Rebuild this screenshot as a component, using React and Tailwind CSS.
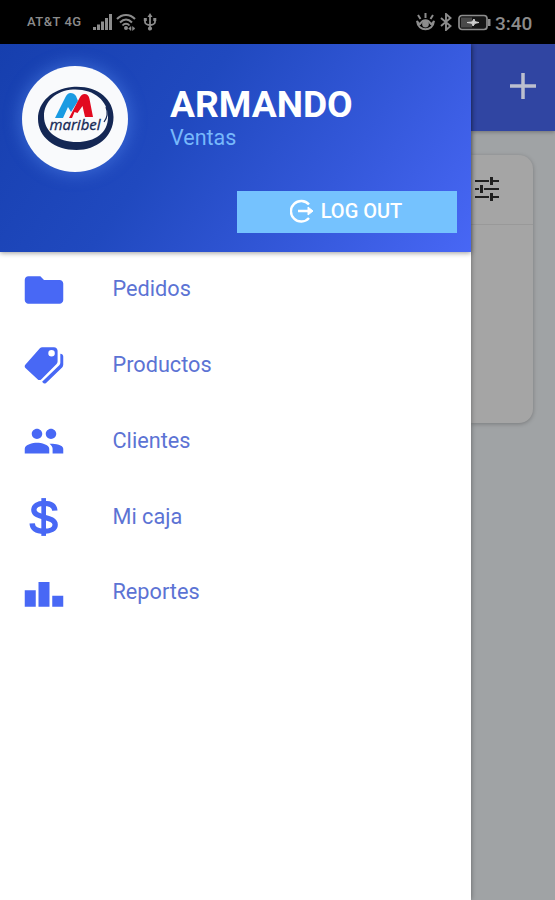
const menu = [
  { label: "Pedidos", icon: "folder" },
  { label: "Productos", icon: "tags" },
  { label: "Clientes", icon: "people" },
  { label: "Mi caja", icon: "dollar" },
  { label: "Reportes", icon: "podium" },
];

function MenuIcon({ name }) {
  return (
    <svg viewBox="0 0 512 512" className="w-[44px] h-[44px] shrink-0" fill="#4868f5">
      {name === "folder" && (
        <path d="M213.338 96H74.666C51.197 96 32 115.198 32 138.667v234.666C32 396.802 51.197 416 74.666 416h362.668C460.803 416 480 396.802 480 373.333V181.333c0-23.468-19.197-42.666-42.666-42.666H256L213.338 96z" />
      )}
      {name === "tags" && (
        <>
          <path
            fillRule="evenodd"
            d="M236 48h136c24 0 42 18 42 42v126c0 11-4 20-12 28L226 422c-14 13-32 13-45 0L40 290c-12-12-11-29 1-41L208 60c8-8 17-12 28-12zM344 80a38 38 0 1 0 0 76 38 38 0 1 0 0-76z"
          />
          <path d="M446 124c20 0 34 14 34 34v96c0 12-5 22-13 30L280 464c-14 12-28 10-38-4l-8-10L434 258c8-8 12-17 12-28V124z" />
        </>
      )}
      {name === "dollar" && (
        <g fill="none" stroke="#4868f5">
          <path strokeWidth="54" d="M252 36v440" />
          <path
            strokeWidth="62"
            d="M382 182c-4-56-48-84-126-84-74 0-118 28-118 76 0 106 248 64 248 172 0 48-54 76-130 76-84 0-134-32-138-92"
          />
        </g>
      )}
      {name === "people" && (
        <path d="M337.454 232c33.599 0 61.092-27.002 61.092-60 0-32.997-27.493-60-61.092-60s-61.09 27.003-61.09 60c0 32.998 27.491 60 61.09 60zm-162.908 0c33.599 0 61.09-27.002 61.09-60 0-32.997-27.491-60-61.09-60s-61.092 27.003-61.092 60c0 32.998 27.493 60 61.092 60zm0 44C126.688 276 32 298.998 32 346v54h285.092v-54c0-47.002-94.688-70-142.546-70zm162.908 11.003c-6.105 0-10.325 0-17.454.997 23.426 17.003 36 40.002 36 58v54h124v-54c0-47.002-94.688-58.997-142.546-58.997z" />
      )}
      {name === "podium" && <path d="M32 224h128v192H32zM192 128h128v288H192zM352 288h128v128H352z" />}
    </svg>
  );
}

function StatusBar() {
  return (
    <header className="h-[44px] shrink-0 bg-black flex items-center text-[#8c8c8c] pl-[27px] pr-[23px]">
      <span className="text-[13px] font-medium tracking-[0.5px] w-[55px] mr-[11px] whitespace-nowrap">AT&amp;T 4G</span>
      <svg width="20" height="18" viewBox="0 0 20 18" fill="currentColor">
        <path d="M0 14h3v3H0zM4 11.500h3V17H4zM8 8.500h3V17H8zM12 5h3v12h-3zM16 1h3v16h-3z" />
      </svg>
      <svg width="22" height="18" viewBox="0 0 22 18" className="ml-[3px]" fill="none" stroke="currentColor" strokeWidth="2">
        <path d="M1 6c5-5.500 13-5.500 18 0M4 9.500c4-4 8-4 12 0M6.500 12.500c2-2.500 5-2.500 7 0" />
        <circle cx="10" cy="15" r="1" />
        <path d="M12.500 15.500l2.500-2v4zM19 15.500l-2.500-2v4z" fill="currentColor" strokeWidth=".5" />
      </svg>
      <svg width="14" height="18" viewBox="0 0 14 18" className="ml-[5px]" fill="none" stroke="currentColor" strokeWidth="1.8">
        <path d="M7 2v13M2 6v3c0 2 3 3 5 3s5-1 5-3V6" />
        <path d="M4.500 4L7 0l2.500 4zM.8 5h3v3h-3zM10.300 5h3v3h-3z" fill="currentColor" stroke="none" />
        <circle cx="7" cy="15.500" r="1.200" fill="currentColor" />
      </svg>
      <div className="flex-1" />
      <svg width="19" height="18" viewBox="0 0 19 18" fill="none" stroke="currentColor" strokeWidth="2">
        <path d="M1 8c1 2 2 3 3 3 3-5 8-5 11 0 1 0 2-1 3-3-1 11-16 11-17 0zM2 2l2.500 4M9.500 0v5M17 2l-2.500 4" />
        <circle cx="9.500" cy="11" r="2.400" fill="currentColor" />
      </svg>
      <svg width="12" height="18" viewBox="0 0 12 18" className="ml-[5px]" fill="none" stroke="currentColor" strokeWidth="1.900">
        <path d="M1 5l9.500 8L6 17V1l4.500 4L1 13" />
      </svg>
      <svg width="33" height="17" viewBox="0 0 33 16" className="ml-[6px]">
        <rect x="1" y="1" width="28" height="14" rx="3" fill="#161616" stroke="currentColor" strokeWidth="1.700" />
        <path d="M3 3h11v10H3z" fill="#4a4a4a" />
        <path d="M30 4.500h2.500v7H30z" fill="currentColor" />
        <path d="M9 8l5-.5 2-3 1 2.700 4 .8-4 .8-2 2.700-1-2.700z" fill="#d0d0d0" stroke="#d0d0d0" />
      </svg>
      <span className="ml-[4px] pt-[2px] w-[37px] text-[19px] font-medium leading-none">3:40</span>
    </header>
  );
}

function Logo() {
  return (
    <div className="w-[106px] h-[106px] rounded-full bg-[#f9fafc] shadow-[0_0_16px_3px_rgba(105,160,255,0.35)] shrink-0">
      <svg viewBox="0 0 106 106" className="w-full h-full">
        <path
          fillRule="evenodd"
          fill="#142754"
          d="M50 21c25-2 41.500 12 41.500 30 0 20-17 33-37 33-22 0-38.500-13-38.500-31 0-17 14-30 34-32zM51 23.500c-17 1-29 12-29 26.500 0 16 14 26 33 26 18 0 31-9 31-25 0-17-15-28.500-35-27.500z"
        />
        <path d="M84 41c2 5 1 11-2 15" stroke="#142754" strokeWidth="1.200" fill="none" />
        <path d="M33 52l10.500-21q2-4 5-4 3.500 0 5.500 3l2 5-7 11-3-5-5 11z" fill="#1a9be2" />
        <path d="M47 52l10.500-20q2-4 5-4 4 0 5 5l3.500 18h-8l-2.500-11-5 7-3-1-2.500 6z" fill="#e20a20" />
        <text
          x="27.5"
          y="63.500"
          fill="#142754"
          stroke="#142754"
          strokeWidth=".3"
          fontSize="15"
          fontStyle="italic"
          fontFamily="'Open Sans', sans-serif"
          textLength="51"
          lengthAdjust="spacingAndGlyphs"
        >
          maribel
        </text>
      </svg>
    </div>
  );
}

function Drawer() {
  return (
    <aside className="relative z-10 w-[471px] shrink-0 bg-white shadow-[0_0_5px_rgba(0,0,0,0.4)]">
      <div className="h-[208px] bg-[linear-gradient(125deg,#163fae_0%,#2049bf_38%,#3458da_70%,#4867f5_100%)] shadow-[0_1px_5px_rgba(0,0,0,0.4)] pt-[22px] pl-[22px] pr-[14px]">
        <div className="flex h-[125px]">
          <Logo />
          <div className="ml-[42px] pt-[16px]">
            <h1 className="text-[37.200px] leading-[44px] font-bold text-white">ARMANDO</h1>
            <p className="text-[21.500px] leading-[24px] text-[#77b8fb]">Ventas</p>
          </div>
        </div>
        <button className="ml-auto w-[220px] h-[42px] pb-[2px] pr-[2px] bg-[#75c2fe] text-white flex items-center justify-center gap-[7px] text-[20px] font-medium">
          <svg width="24" height="26" viewBox="0 0 24 26" fill="none" stroke="white" strokeWidth="2.400">
            <path d="M19 6.500a10.300 10.300 0 1 0 0 13.500M8 13h12" />
            <path d="M18 9l5 4-5 4z" fill="white" strokeWidth="1" />
          </svg>
          LOG OUT
        </button>
      </div>
      <nav className="-mt-[0.4px]">
        {menu.map((item) => (
          <a key={item.label} className="flex items-center h-[75.800px] pl-[22px] text-[21.700px] text-[#5c73d4]">
            <MenuIcon name={item.icon} />
            <span className="ml-[46.500px]">{item.label}</span>
          </a>
        ))}
      </nav>
    </aside>
  );
}

function Backdrop() {
  return (
    <main className="flex-1 min-w-0 bg-[#a0a3a5]">
      <div className="h-[87px] pb-[4px] bg-[#3045a2] flex items-center justify-end pr-[19px] shadow-[0_1px_4px_rgba(0,0,0,0.3)]">
        <svg width="26" height="26" viewBox="0 0 26 26" stroke="#bcc0cf" strokeWidth="3.500">
          <path d="M0 13h26M13 0v26" />
        </svg>
      </div>
      <section className="mt-[24px] mr-[22px] h-[268px] rounded-r-[14px] bg-[#a5a5a5] shadow-[0_1px_4px_rgba(0,0,0,0.25)]">
        <div className="h-[70px] pt-[21px] pl-[4px] border-b border-[#999]">
          <svg width="24" height="26" viewBox="0 0 24 26" stroke="#202020" strokeWidth="2">
            <path d="M0 5h14M18 5h6M0 13h4M9 13h15M0 21h14M18 21h6" />
            <path strokeWidth="3" d="M16.500 1v8M6.500 9v8M16.500 17v8" />
          </svg>
        </div>
      </section>
    </main>
  );
}

export default function App() {
  return (
    <div className="w-[555px] h-[900px] overflow-hidden flex flex-col font-['Roboto',sans-serif]">
      <StatusBar />
      <div className="flex flex-1 min-h-0">
        <Drawer />
        <Backdrop />
      </div>
    </div>
  );
}
